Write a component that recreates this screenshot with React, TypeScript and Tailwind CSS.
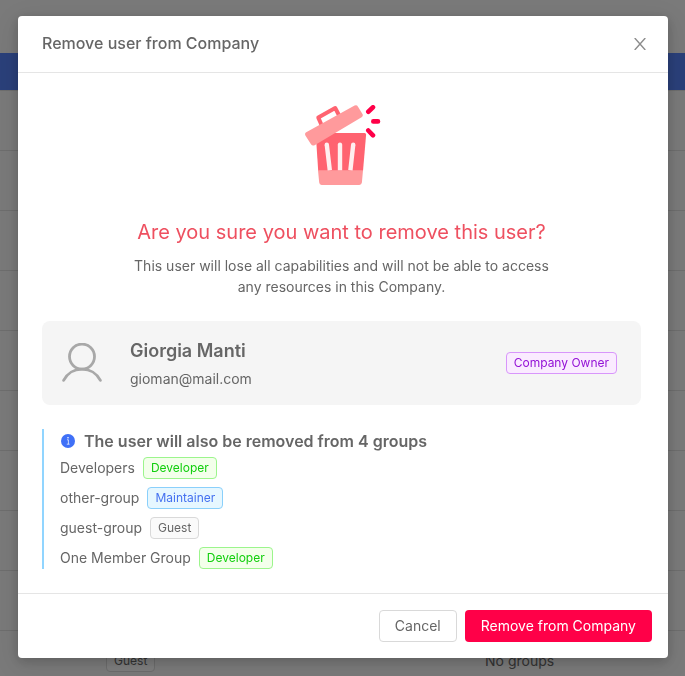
import type { ReactNode } from 'react';

const tagStyles = {
  purple: 'border-[#d896fb] bg-[#faebff] text-[#9412d6]',
  green: 'border-[#9cf58c] bg-[#f3ffeb] text-[#11cf0c]',
  blue: 'border-[#8ad0fb] bg-[#e6f7ff] text-[#4571f0]',
  gray: 'border-[#d9d9d9] bg-[#fafafa] text-[#666666]',
};

type TagColor = keyof typeof tagStyles;

function Tag({ color, children }: { color: TagColor; children: ReactNode }) {
  return (
    <span className={`inline-block shrink-0 rounded border px-[7px] text-xs leading-5 whitespace-nowrap ${tagStyles[color]}`}>
      {children}
    </span>
  );
}

function TrashIllustration() {
  return (
    <svg width="81" height="80" viewBox="0 0 81 80" fill="none" aria-hidden="true">
      <path d="M14.7 28H63.5Q65.2 28 65.1 29.8L62 66H17.2Z" fill="#ff6370" />
      <path d="M17 65.3H62L60.9 77.6Q60.6 80 58.3 80H20.6Q18.4 80 18.2 77.6Z" fill="#ff9a9c" />
      <path d="M25.8 39.8L28.8 65.3M39 39.8V65.3M52.2 39.8L49.4 65.3" stroke="#ffefef" strokeWidth="4.4" />
      <circle cx="25.8" cy="39.8" r="2.2" fill="#ffefef" />
      <circle cx="39" cy="39.8" r="2.2" fill="#ffefef" />
      <circle cx="52.2" cy="39.8" r="2.2" fill="#ffefef" />
      <path d="M21 21L17.3 12.6L34.2 3L38.4 11" stroke="#ff6370" strokeWidth="4" strokeLinejoin="round" />
      <path d="M5.2 27.2L53.6.6Q55.8 -.4 57 1.7L61.6 9.2Q62.4 11.2 60.6 12.3L13.6 40.2Q11.4 41.4 10 39.2L4.4 30.4Q3.4 28.4 5.2 27.2Z" fill="#ff9a9c" />
      <path d="M67.3 6.7L72 2.3M72.3 16.4H77M67.3 25.5L72 30.3" stroke="#ff0048" strokeWidth="4.6" strokeLinecap="round" />
    </svg>
  );
}

function UserIcon() {
  return (
    <svg width="40" height="40" viewBox="0 0 40 40" fill="none" stroke="#a8a8a8" strokeWidth="2.8" strokeLinecap="round" aria-hidden="true">
      <circle cx="20" cy="13.6" r="12.5" />
      <path d="M1.6 37.4A20.7 20.7 0 0 1 38.4 37.4" />
    </svg>
  );
}

const groups: { name: string; role: string; color: TagColor }[] = [
  { name: 'Developers', role: 'Developer', color: 'green' },
  { name: 'other-group', role: 'Maintainer', color: 'blue' },
  { name: 'guest-group', role: 'Guest', color: 'gray' },
  { name: 'One Member Group', role: 'Developer', color: 'green' },
];

const rows = ['', '', '', '', '', '', '', '', '', 'Guest'];

function UsersPage() {
  return (
    <div aria-hidden="true" className="h-screen overflow-hidden bg-[#f5f5f5] pt-[53px] text-[#666666]">
      <div className="h-[37px] bg-[#5580f5]" />
      {rows.map((role, i) => (
        <div key={i} className="grid h-[60px] grid-cols-[106px_379px_1fr] items-center border-t border-[#dcdcdc] text-sm">
          <span />
          <span>{role && <Tag color="gray">{role}</Tag>}</span>
          <span>{role && 'No groups'}</span>
        </div>
      ))}
    </div>
  );
}

export default function App() {
  return (
    <div className="font-[Inter,sans-serif] text-sm text-[#666666]">
      <UsersPage />
      <div className="fixed inset-0 flex items-start justify-center overflow-auto bg-black/50 pt-4 pr-[17px] pl-[18px]">
        <section
          role="dialog"
          aria-modal="true"
          aria-labelledby="modal-title"
          className="w-full max-w-[650px] rounded bg-white shadow-[0_3px_12px_rgba(0,0,0,0.2),0_6px_28px_8px_rgba(0,0,0,0.06)]"
        >
          <header className="flex items-start justify-between border-b border-[#e5e5e5] px-6 pt-4 pb-[18px]">
            <h1 id="modal-title" className="text-base leading-[22px] font-medium">Remove user from Company</h1>
            <button type="button" aria-label="Close" className="-mr-2 mt-0.5 flex size-6 h-5 items-center justify-center text-[#8c8c8c]">
              <svg width="12" height="12" viewBox="0 0 12 12" fill="none" stroke="currentColor" strokeWidth="1.4" aria-hidden="true">
                <path d="M.7 0L11.3 12M11.3 0L.7 12" />
              </svg>
            </button>
          </header>

          <div className="py-6 pr-[27px] pl-6">
            <div className="flex flex-col items-center px-20 pt-2 text-center">
              <TrashIllustration />
              <h2 className="mt-8 text-xl leading-[30px] text-[#ee5060]">Are you sure you want to remove this user?</h2>
              <p className="mt-2 max-w-[440px] leading-[21px]">
                This user will lose all capabilities and will not be able to access any resources in this Company.
              </p>
            </div>

            <div className="mt-6 flex items-center rounded-lg bg-[#f5f5f5] py-4 pr-6 pl-5">
              <UserIcon />
              <div className="ml-7 flex-1">
                <div className="text-lg leading-7 font-semibold">Giorgia Manti</div>
                <div className="mt-1 leading-5">gioman@mail.com</div>
              </div>
              <Tag color="purple">Company Owner</Tag>
            </div>

            <div className="mt-6 border-l-2 border-[#91d5ff] pl-4">
              <div className="flex items-center gap-2">
                <svg width="16" height="16" viewBox="0 0 16 16" aria-hidden="true">
                  <circle cx="8" cy="8" r="7" fill="#3f70f7" />
                  <path d="M7 6.8H8.4V11.2M6.8 11.2H9.6" stroke="#fff" strokeOpacity=".7" fill="none" />
                  <circle cx="8" cy="4.7" r=".8" fill="#fff" />
                </svg>
                <h3 className="text-base leading-6 font-semibold">The user will also be removed from 4 groups</h3>
              </div>
              <ul className="mt-1 flex flex-col gap-2">
                {groups.map((group) => (
                  <li key={group.name} className="flex items-center gap-2">
                    <span className="leading-[22px]">{group.name}</span>
                    <Tag color={group.color}>{group.role}</Tag>
                  </li>
                ))}
              </ul>
            </div>
          </div>

          <footer className="flex justify-end gap-2 border-t border-[#e5e5e5] p-4">
            <button type="button" className="h-8 rounded border border-[#d9d9d9] bg-white px-[15px]">Cancel</button>
            <button type="button" className="h-8 rounded bg-[#ff0048] px-4 text-white">Remove from Company</button>
          </footer>
        </section>
      </div>
    </div>
  );
}
